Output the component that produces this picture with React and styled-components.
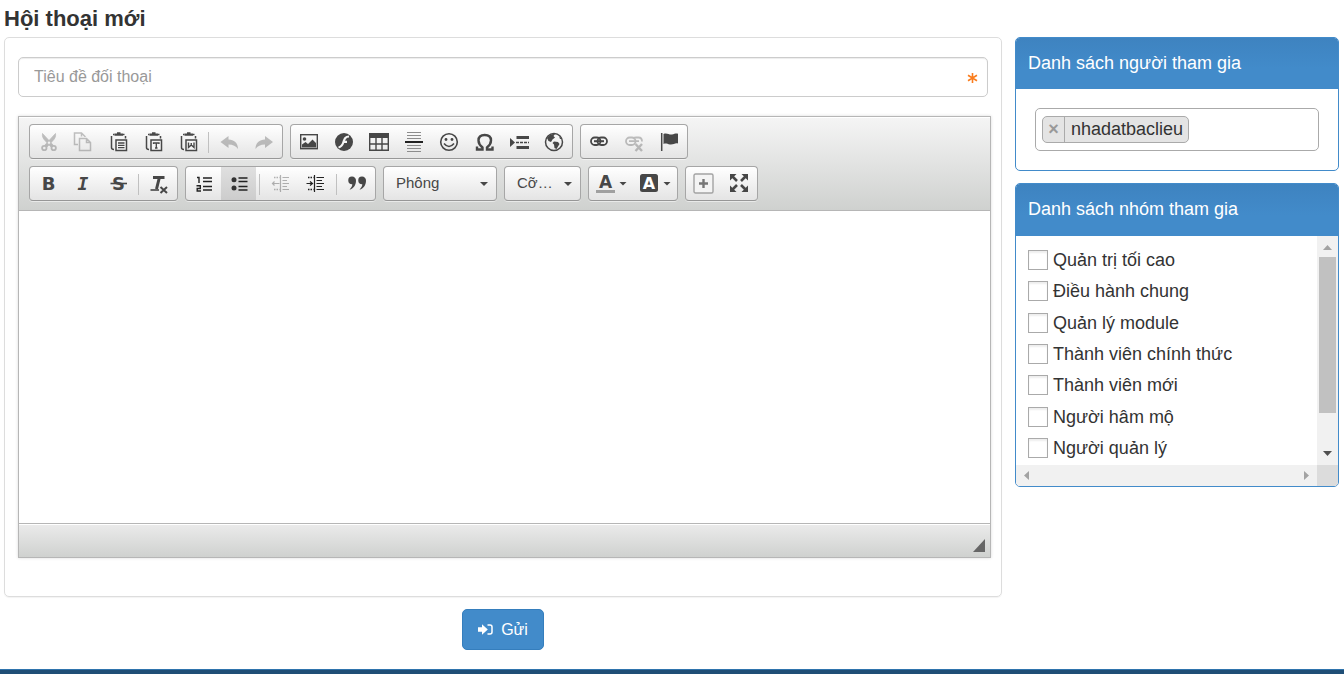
import React from "react";
import styled, { createGlobalStyle } from "styled-components";

const GlobalStyle = createGlobalStyle`
  *, *::before, *::after { box-sizing: border-box; }
  body {
    margin: 0;
    background: #fff;
    color: #333;
    font-family: "Liberation Sans", Arial, sans-serif;
    font-size: 18px;
  }
  button, input, select { font-family: inherit; margin: 0; }
`;

const Page = styled.div`
  padding: 4px 5px 0 4px;
`;

const Title = styled.h1`
  margin: 0 0 3px;
  font-size: 22px;
  line-height: 30px;
  font-weight: bold;
`;

const Columns = styled.div`
  display: grid;
  grid-template-columns: minmax(0, 1fr) 324px;
  gap: 13px;
  align-items: start;
`;

const Form = styled.form`
  display: flex;
  flex-direction: column;
  align-items: stretch;
  gap: 12px;
`;

const Card = styled.div`
  display: flex;
  flex-direction: column;
  gap: 19px;
  padding: 19px 10px 38px 13px;
  border: 1px solid #ddd;
  border-radius: 5px;
  box-shadow: 0 1px 1px rgba(0, 0, 0, 0.05);
`;

const SubjectField = styled.div`
  position: relative;
  margin-right: 3px;
`;

const SubjectInput = styled.input`
  display: block;
  width: 100%;
  height: 40px;
  padding: 0 36px 0 15px;
  border: 1px solid #ccc;
  border-radius: 5px;
  box-shadow: inset 0 1px 1px rgba(0, 0, 0, 0.075);
  background: #fff;
  color: #555;
  font-size: 16px;
  &::placeholder { color: #999; opacity: 1; }
`;

const RequiredMark = styled.svg`
  position: absolute;
  right: 10px;
  top: 15px;
  width: 11px;
  height: 12px;
  stroke: #fa7d1e;
  stroke-width: 1.6;
`;

const Editor = styled.div`
  border: 1px solid #b6b6b6;
  box-shadow: 0 0 3px rgba(0, 0, 0, 0.15);
`;

const Toolbar = styled.div`
  display: flex;
  flex-direction: column;
  gap: 7px;
  padding: 7px 10px 9px;
  border-bottom: 1px solid #b6b6b6;
  background: linear-gradient(#f5f5f5, #cfd1cf);
  box-shadow: inset 0 1px 0 #fff;
`;

const ToolRow = styled.div`
  display: flex;
  flex-wrap: wrap;
  gap: 7px;
`;

const ToolGroup = styled.div`
  display: flex;
  height: 35px;
  padding-right: ${(p) => (p.$slack ? "1px" : "0")};
  border: 1px solid #a6a6a6;
  border-bottom-color: #979797;
  border-radius: 4px;
  background: linear-gradient(#fff, #e4e4e4);
  box-shadow: 0 1px 0 rgba(255, 255, 255, 0.5), inset 0 0 2px rgba(255, 255, 255, 0.15);
`;

const ToolButton = styled.button`
  display: flex;
  align-items: center;
  justify-content: center;
  gap: 3px;
  width: ${(p) => (p.$menu ? "44px" : "35px")};
  height: 33px;
  padding: 0;
  border: 0;
  background: ${(p) => (p.$active ? "linear-gradient(#e0e0e0, #cccccc)" : "none")};
  color: #474747;
  opacity: ${(p) => (p.$dim ? 0.32 : 1)};
`;

const Glyph = styled.svg`
  display: block;
  flex: none;
  width: 21px;
  height: 21px;
  fill: none;
  stroke: currentColor;
  stroke-width: 1.4;
`;

const Letter = styled.text`
  fill: ${(p) => (p.$light ? "#fff" : "currentColor")};
  stroke: none;
  font-family: "DejaVu Sans", sans-serif;
  font-weight: bold;
  text-anchor: middle;
`;

const MonoLetter = styled(Letter)`
  font-family: "DejaVu Sans Mono", monospace;
  font-style: oblique;
`;

const Separator = styled.span`
  width: 1px;
  height: 21px;
  margin: 7px 3px 0;
  background: #c0c0c0;
`;

const Caret = styled.span`
  width: 8px;
  height: 4px;
  background: #474747;
  clip-path: polygon(0 0, 100% 0, 50% 100%);
`;

const Combo = styled.label`
  position: relative;
  display: block;
  width: ${(p) => (p.$wide ? "114px" : "77px")};
  height: 35px;
`;

const ComboSelect = styled.select`
  appearance: none;
  width: 100%;
  height: 35px;
  padding: 0 20px 2px 12px;
  border: 1px solid #a6a6a6;
  border-bottom-color: #979797;
  border-radius: 4px;
  background: linear-gradient(#fff, #e4e4e4);
  box-shadow: 0 1px 0 rgba(255, 255, 255, 0.5);
  color: #474747;
  font-size: 15px;
`;

const ComboCaret = styled(Caret)`
  position: absolute;
  right: 9px;
  top: 16px;
  pointer-events: none;
`;

const EditArea = styled.div`
  min-height: 312px;
  background: #fff;
  outline: none;
`;

const StatusBar = styled.div`
  display: flex;
  justify-content: flex-end;
  align-items: flex-end;
  height: 34px;
  padding: 5px;
  border-top: 1px solid #b6b6b6;
  background: linear-gradient(#ebebeb, #cfd1cf);
  box-shadow: inset 0 1px 0 #fff;
`;

const ResizeGrip = styled.span`
  width: 12px;
  height: 13px;
  background: #666;
  clip-path: polygon(100% 0, 100% 100%, 0 100%);
`;

const SendButton = styled.button`
  display: flex;
  align-items: center;
  justify-content: center;
  gap: 8px;
  align-self: center;
  width: 82px;
  height: 41px;
  padding: 0;
  border: 1px solid #357ebd;
  border-radius: 5px;
  background: #428bca;
  color: #fff;
  font-size: 16px;
`;

const SendIcon = styled.svg`
  width: 15px;
  height: 11px;
  fill: none;
  stroke: currentColor;
  stroke-width: 1.5;
`;

const Sidebar = styled.aside`
  display: flex;
  flex-direction: column;
  gap: 12px;
`;

const Panel = styled.section`
  overflow: hidden;
  border: 1px solid #428bca;
  border-radius: 5px;
  background: #fff;
`;

const PanelTitle = styled.h2`
  margin: 0;
  padding: 0 12px ${(p) => (p.$tall ? "1px" : "0")};
  background: linear-gradient(#3e83c0, #428bca 60%);
  color: #fff;
  font-size: 18px;
  font-weight: normal;
  line-height: 51px;
`;

const PanelBody = styled.div`
  padding: 19px;
`;

const TokenBox = styled.div`
  display: flex;
  align-items: center;
  height: 43px;
  padding: 0 6px;
  border: 1px solid #aaa;
  border-radius: 5px;
`;

const Token = styled.span`
  display: flex;
  height: 27px;
  border: 1px solid #aaa;
  border-radius: 5px;
  background: #e4e4e4;
  font-size: 18px;
  line-height: 25px;
`;

const TokenRemove = styled.button`
  width: 22px;
  padding: 0;
  border: 0;
  border-right: 1px solid #aaa;
  background: none;
  color: #999;
  font-size: 18px;
  font-weight: bold;
  line-height: 25px;
`;

const TokenText = styled.span`
  padding: 0 5px 0 6px;
`;

const TokenInput = styled.input`
  flex: 1;
  min-width: 0;
  border: 0;
  outline: none;
  font-size: 18px;
`;

const ScrollFrame = styled.div`
  display: grid;
  grid-template-columns: minmax(0, 1fr) 21px;
  grid-template-rows: 229px 21px;
`;

const GroupList = styled.div`
  display: flex;
  flex-direction: column;
  padding: 8px 12px 1px;
`;

const GroupRow = styled.label`
  flex: 1;
  display: flex;
  align-items: center;
  gap: 5px;
  font-size: 18px;
  line-height: 20px;
`;

const CheckBox = styled.input`
  appearance: none;
  width: 20px;
  height: 20px;
  border: 1px solid #aaa;
  background: #fff;
  box-shadow: inset 0 2px 2px rgba(0, 0, 0, 0.07);
`;

const VerticalBar = styled.div`
  display: flex;
  flex-direction: column;
  align-items: center;
  padding-bottom: 9px;
  background: #f1f1f1;
`;

const HorizontalBar = styled.div`
  display: flex;
  align-items: center;
  justify-content: space-between;
  padding: 0 8px;
  background: #f1f1f1;
`;

const Thumb = styled.span`
  width: 17px;
  height: 156px;
  margin: 7px 0 auto;
  background: #c1c1c1;
`;

const shapes = {
  up: "polygon(50% 0, 100% 100%, 0 100%)",
  down: "polygon(0 0, 100% 0, 50% 100%)",
  left: "polygon(100% 0, 100% 100%, 0 50%)",
  right: "polygon(0 0, 100% 50%, 0 100%)",
};

const BarArrow = styled.span`
  flex: none;
  width: ${(p) => (p.$dir === "up" || p.$dir === "down" ? "9px" : "5px")};
  height: ${(p) => (p.$dir === "up" || p.$dir === "down" ? "5px" : "9px")};
  margin-top: ${(p) => (p.$dir === "up" ? "9px" : "0")};
  background: ${(p) => (p.$dir === "down" ? "#505050" : "#a3a3a3")};
  clip-path: ${(p) => shapes[p.$dir]};
`;

const Corner = styled.div`
  background: #dcdcdc;
`;

const Footer = styled.footer`
  height: 5px;
  margin-top: 19px;
  border-top: 1px solid #2f74ad;
  background: #1f4e76;
`;

const clipboard = (
  <>
    <path d="M7.500 3.500H6M4.500 5V16.500Q4.500 18.500 7 18.500M16 3.500H17.500M18.500 5V7.500" strokeWidth="1.500" />
    <path d="M7.500 4.700V2.500H10V1.300H13.500V2.500H16V4.700Z" fill="currentColor" stroke="none" />
    <rect x="9" y="9" width="10.500" height="10.500" fill="#f6f6f6" strokeWidth="1.500" />
  </>
);

const icons = {
  cut: (
    <g>
      <path d="M5.500 2.500C5 5 6 7.500 8 9.500L14.500 16.500L16.500 14.500ZM18.500 2.500C19 5 18 7.500 16 9.500L9.500 16.500L7.500 14.500Z" fill="currentColor" strokeWidth="0.800" />
      <circle cx="7.300" cy="17" r="2.200" strokeWidth="1.800" />
      <circle cx="16.700" cy="17" r="2.200" strokeWidth="1.800" />
    </g>
  ),
  copy: (
    <g strokeWidth="1.500">
      <path d="M6 13.500H2.500V2H9.500L13 5.500V6M9.500 2V5.500" />
      <path d="M7.500 7.500H14.500L18.500 11.500V19.500H7.500ZM14.500 7.500V11.500H18.500" />
    </g>
  ),
  paste: (
    <>
      {clipboard}
      <path d="M11 12H17.500M11 14.300H17.500M11 16.600H17.500" strokeWidth="1.300" />
    </>
  ),
  pasteText: (
    <>
      {clipboard}
      <path d="M11.500 13V12H17V13M14.300 12V17M13 17H15.500" strokeWidth="1.300" />
    </>
  ),
  pasteWord: (
    <>
      {clipboard}
      <path d="M11.500 11.500V16.500L14.250 14L17 16.500V11.500M14.250 12V14" strokeWidth="1.400" />
    </>
  ),
  undo: <path d="M1.500 11L9.500 5V8.500C15 8.500 19 12 19 18C17 15 14 13.500 9.500 13.500V17Z" fill="currentColor" stroke="none" />,
  redo: <path d="M19 11L11 5V8.500C5.500 8.500 1.500 12 1.500 18C3.500 15 6.500 13.500 11 13.500V17Z" fill="currentColor" stroke="none" />,
  image: (
    <>
      <rect x="2.700" y="3.700" width="16.600" height="14" />
      <circle cx="6.500" cy="8" r="1.800" fill="currentColor" stroke="none" />
      <path d="M4 16.500V13.500L7.500 11L10 13L14.500 8.500L18 12V16.500Z" fill="currentColor" stroke="none" />
    </>
  ),
  flash: (
    <>
      <circle cx="11" cy="11" r="9" fill="currentColor" stroke="none" />
      <path d="M16 5.500C12 5.500 11.500 8 10.500 11C9.500 14 8.500 16 5.500 16.500M9.500 10.800H14" stroke="#f4f4f4" strokeWidth="2.200" />
    </>
  ),
  table: (
    <>
      <rect x="1" y="2" width="20" height="5" fill="currentColor" stroke="none" />
      <path d="M1.700 6V19.300H20.300V6M1.700 13H20.300M8 6V19.300M14 6V19.300" />
    </>
  ),
  rule: (
    <>
      <path d="M4 1.500H18M4 4.500H18M4 7.500H18M4 14.500H18M4 17.500H18M4 20.500H18" stroke="#8c8c8c" strokeWidth="1.200" />
      <path d="M2 11H20" stroke="#222" strokeWidth="2" />
    </>
  ),
  smiley: (
    <>
      <circle cx="11" cy="11" r="8.300" strokeWidth="1.600" />
      <circle cx="8" cy="8.500" r="1.400" fill="currentColor" stroke="none" />
      <circle cx="14" cy="8.500" r="1.400" fill="currentColor" stroke="none" />
      <path d="M6 12.500Q11 18.500 16 12.500" strokeWidth="1.600" />
    </>
  ),
  omega: (
    <path d="M4 15.500V18.500H9.500V16.500C6.500 14 5.500 12 5.500 9.500C5.500 6 8 4 11.700 4S18 6 18 9.500C18 12 17 14 14 16.500V18.500H19.500V15.500" strokeWidth="2.400" />
  ),
  pageBreak: (
    <>
      <path d="M2 7L7 11.500L2 16Z" fill="currentColor" stroke="none" />
      <path d="M8.500 6.500H21M8.500 16.500H21" strokeWidth="3.200" />
      <path d="M8 11.500H21" strokeDasharray="3 1" />
    </>
  ),
  globe: (
    <>
      <circle cx="11" cy="11" r="8.500" strokeWidth="1.500" />
      <path d="M4 7C6 4 9 2.500 12 3L10.500 5L12 6.500L9.500 8.500L8 11L5.500 10ZM11 10.500L15 11L16.500 13L13.500 18L11.500 17L11 13.500L9.500 12ZM16 5L18.500 8L17 8Z" fill="currentColor" stroke="none" />
    </>
  ),
  link: (
    <g strokeWidth="1.800">
      <rect x="3" y="6.500" width="9.500" height="7.500" rx="3.700" />
      <rect x="9.500" y="6.500" width="9.500" height="7.500" rx="3.700" />
      <path d="M6 10.200H16" strokeWidth="2" />
    </g>
  ),
  unlink: (
    <g strokeWidth="1.800">
      <rect x="3" y="6.500" width="9.500" height="7.500" rx="3.700" />
      <path d="M10 7.500Q11.500 6.500 13 6.500H15.500Q19 6.500 19 10.500M6 10.200H16" />
      <path d="M12.500 13L19 20M19 13L12.500 20" strokeWidth="2.400" />
    </g>
  ),
  flag: (
    <>
      <path d="M3.700 2V20" strokeWidth="1.500" />
      <path d="M5.500 3C9 1.500 11 4 14 3.500C16.500 3 18 2 20 2.800V12.500C17 11.500 15.500 14 12 13.500C9 13 8 12 5.500 13Z" fill="currentColor" stroke="none" />
    </>
  ),
  bold: <Letter x="11.500" y="17" fontSize="18">B</Letter>,
  italic: <MonoLetter x="11" y="17" fontSize="18">I</MonoLetter>,
  strike: (
    <>
      <Letter x="11.500" y="17" fontSize="18">S</Letter>
      <path d="M3.500 10.500H20" strokeWidth="1.600" />
    </>
  ),
  clear: (
    <>
      <path d="M4 4.500H15.500M10.500 4L7.500 16" strokeWidth="3" />
      <path d="M1.500 17H10" strokeWidth="1.600" />
      <path d="M11.500 14L18 20M18 14L11.500 20" strokeWidth="2" />
    </>
  ),
  numbered: (
    <g stroke="#222">
      <path d="M4 4.500H6V10M3.500 12.700H7.300V15.500H4.200V18H8" />
      <path d="M10 5H19M10 8.500H19M10 13.500H19M10 17H19" strokeWidth="1.600" />
    </g>
  ),
  bulleted: (
    <g stroke="#222">
      <circle cx="6" cy="6.700" r="2.500" fill="#333" stroke="none" />
      <circle cx="6" cy="15" r="2.500" fill="#333" stroke="none" />
      <path d="M10.500 5H19.500M10.500 8.500H19.500M10.500 13.500H19.500M10.500 17H19.500" strokeWidth="1.600" />
    </g>
  ),
  outdent: (
    <g stroke="#222">
      <path d="M10.500 2V19M12.500 4.500H19M12.500 7.500H17M12.500 10.500H19M12.500 13.500H17M12.500 16.500H19" strokeWidth="1.200" />
      <path d="M2.500 10.500H9.500M4.500 8.500L2.500 10.500L4.500 12.500" strokeWidth="1.200" />
      <path d="M4 4.500H9.500M4 16.500H9.500" strokeDasharray="1.500 1" />
    </g>
  ),
  indent: (
    <g stroke="#222">
      <path d="M9.500 2V19M11.500 4.500H19M11.500 7.500H17M11.500 10.500H19M11.500 13.500H17M11.500 16.500H19" strokeWidth="1.200" />
      <path d="M1.500 10.500H7M5 8.500L7.500 10.500L5 12.500" strokeWidth="1.200" />
      <path d="M3 4.500H8.500M3 16.500H8.500" strokeDasharray="1.500 1" />
    </g>
  ),
  quote: (
    <path d="M5 3.500A4 4 0 0 1 9 7.700C9 12 6.500 15.500 2.500 16.700C4.500 14.500 5.300 13 5.300 11.300A3.900 3.900 0 0 1 5 3.500ZM15 3.500A4 4 0 0 1 19 7.700C19 12 16.500 15.500 12.500 16.700C14.500 14.500 15.300 13 15.300 11.300A3.900 3.900 0 0 1 15 3.500Z" fill="currentColor" stroke="none" />
  ),
  textColor: (
    <>
      <Letter x="10.500" y="14.500" fontSize="17">A</Letter>
      <path d="M1 18.500H20" stroke="#a0a0a0" strokeWidth="3" />
    </>
  ),
  backColor: (
    <>
      <rect x="1" y="1" width="18" height="18" rx="2.500" fill="currentColor" stroke="none" />
      <Letter x="10" y="16" fontSize="16" $light>A</Letter>
    </>
  ),
  blocks: (
    <>
      <rect x="1" y="1" width="19" height="19" rx="1.500" fill="#f4f4f4" stroke="#a3a3a3" />
      <path d="M10.500 6V15M6 10.500H15" stroke="#777" strokeWidth="2.400" />
    </>
  ),
  maximize: (
    <>
      <path d="M2 1H8.500L2 7.500ZM20 1H13.500L20 7.500ZM2 19H8.500L2 12.500ZM20 19H13.500L20 12.500Z" fill="currentColor" stroke="none" />
      <path d="M4 3L9 8M18 3L13 8M4 17L9 12M18 17L13 12" strokeWidth="2.600" />
    </>
  ),
};

function Tool({ icon, label, dim, active, menu }) {
  return (
    <ToolButton type="button" aria-label={label} $dim={dim} $active={active} $menu={menu}>
      <Glyph viewBox="0 0 21 21" aria-hidden="true">{icons[icon]}</Glyph>
      {menu && <Caret />}
    </ToolButton>
  );
}

function ComboBox({ name, text, wide }) {
  return (
    <Combo $wide={wide}>
      <ComboSelect aria-label={name}>
        <option>{text}</option>
      </ComboSelect>
      <ComboCaret />
    </Combo>
  );
}

const groups = [
  "Quản trị tối cao",
  "Điều hành chung",
  "Quản lý module",
  "Thành viên chính thức",
  "Thành viên mới",
  "Người hâm mộ",
  "Người quản lý",
];

export default function App() {
  return (
    <>
      <GlobalStyle />
      <Page>
        <Title>Hội thoại mới</Title>
        <Columns>
          <Form onSubmit={(e) => e.preventDefault()}>
            <Card>
              <SubjectField>
                <SubjectInput type="text" placeholder="Tiêu đề đối thoại" aria-label="Tiêu đề đối thoại" />
                <RequiredMark viewBox="0 0 11 12" aria-hidden="true">
                  <path d="M5.500 1V11M1 3.300L10 8.700M10 3.300L1 8.700" />
                </RequiredMark>
              </SubjectField>
              <Editor>
                <Toolbar role="toolbar">
                  <ToolRow>
                    <ToolGroup>
                      <Tool icon="cut" label="Cắt" dim />
                      <Tool icon="copy" label="Sao chép" dim />
                      <Tool icon="paste" label="Dán" />
                      <Tool icon="pasteText" label="Dán theo định dạng văn bản thuần" />
                      <Tool icon="pasteWord" label="Dán với định dạng Word" />
                      <Separator />
                      <Tool icon="undo" label="Khôi phục thao tác" dim />
                      <Tool icon="redo" label="Làm lại thao tác" dim />
                    </ToolGroup>
                    <ToolGroup $slack>
                      <Tool icon="image" label="Hình ảnh" />
                      <Tool icon="flash" label="Flash" />
                      <Tool icon="table" label="Bảng" />
                      <Tool icon="rule" label="Chèn đường phân cách ngang" />
                      <Tool icon="smiley" label="Hình biểu lộ cảm xúc" />
                      <Tool icon="omega" label="Chèn ký tự đặc biệt" />
                      <Tool icon="pageBreak" label="Chèn ngắt trang" />
                      <Tool icon="globe" label="IFrame" />
                    </ToolGroup>
                    <ToolGroup $slack>
                      <Tool icon="link" label="Chèn liên kết" />
                      <Tool icon="unlink" label="Xoá liên kết" dim />
                      <Tool icon="flag" label="Chèn điểm neo" />
                    </ToolGroup>
                  </ToolRow>
                  <ToolRow>
                    <ToolGroup>
                      <Tool icon="bold" label="Đậm" />
                      <Tool icon="italic" label="Nghiêng" />
                      <Tool icon="strike" label="Gạch xuyên ngang" />
                      <Separator />
                      <Tool icon="clear" label="Xoá định dạng" />
                    </ToolGroup>
                    <ToolGroup>
                      <Tool icon="numbered" label="Danh sách có thứ tự" />
                      <Tool icon="bulleted" label="Danh sách không thứ tự" active />
                      <Separator />
                      <Tool icon="outdent" label="Dịch ra ngoài" dim />
                      <Tool icon="indent" label="Dịch vào trong" />
                      <Separator />
                      <Tool icon="quote" label="Khối trích dẫn" />
                    </ToolGroup>
                    <ComboBox name="Phông" text="Phông" wide />
                    <ComboBox name="Cỡ chữ" text="Cỡ…" />
                    <ToolGroup>
                      <Tool icon="textColor" label="Màu chữ" menu />
                      <Tool icon="backColor" label="Màu nền" menu />
                    </ToolGroup>
                    <ToolGroup $slack>
                      <Tool icon="blocks" label="Hiển thị các khối" />
                      <Tool icon="maximize" label="Phóng to tối đa" />
                    </ToolGroup>
                  </ToolRow>
                </Toolbar>
                <EditArea contentEditable suppressContentEditableWarning role="textbox" aria-label="Nội dung" />
                <StatusBar><ResizeGrip /></StatusBar>
              </Editor>
            </Card>
            <SendButton type="submit">
              <SendIcon viewBox="0 0 15 11" aria-hidden="true">
                <path d="M0 3.300H4V0.300L9.800 5.500L4 10.700V7.700H0Z" fill="currentColor" stroke="none" />
                <path d="M9.500 1H12Q14 1 14 3V8Q14 10 12 10H9.500" />
              </SendIcon>
              Gửi
            </SendButton>
          </Form>
          <Sidebar>
            <Panel>
              <PanelTitle>Danh sách người tham gia</PanelTitle>
              <PanelBody>
                <TokenBox>
                  <Token>
                    <TokenRemove type="button" aria-label="Xoá nhadatbaclieu">×</TokenRemove>
                    <TokenText>nhadatbaclieu</TokenText>
                  </Token>
                  <TokenInput type="text" aria-label="Danh sách người tham gia" />
                </TokenBox>
              </PanelBody>
            </Panel>
            <Panel>
              <PanelTitle $tall>Danh sách nhóm tham gia</PanelTitle>
              <ScrollFrame>
                <GroupList>
                  {groups.map((name) => (
                    <GroupRow key={name}>
                      <CheckBox type="checkbox" />
                      {name}
                    </GroupRow>
                  ))}
                </GroupList>
                <VerticalBar aria-hidden="true">
                  <BarArrow $dir="up" />
                  <Thumb />
                  <BarArrow $dir="down" />
                </VerticalBar>
                <HorizontalBar aria-hidden="true">
                  <BarArrow $dir="left" />
                  <BarArrow $dir="right" />
                </HorizontalBar>
                <Corner />
              </ScrollFrame>
            </Panel>
          </Sidebar>
        </Columns>
      </Page>
      <Footer />
    </>
  );
}
